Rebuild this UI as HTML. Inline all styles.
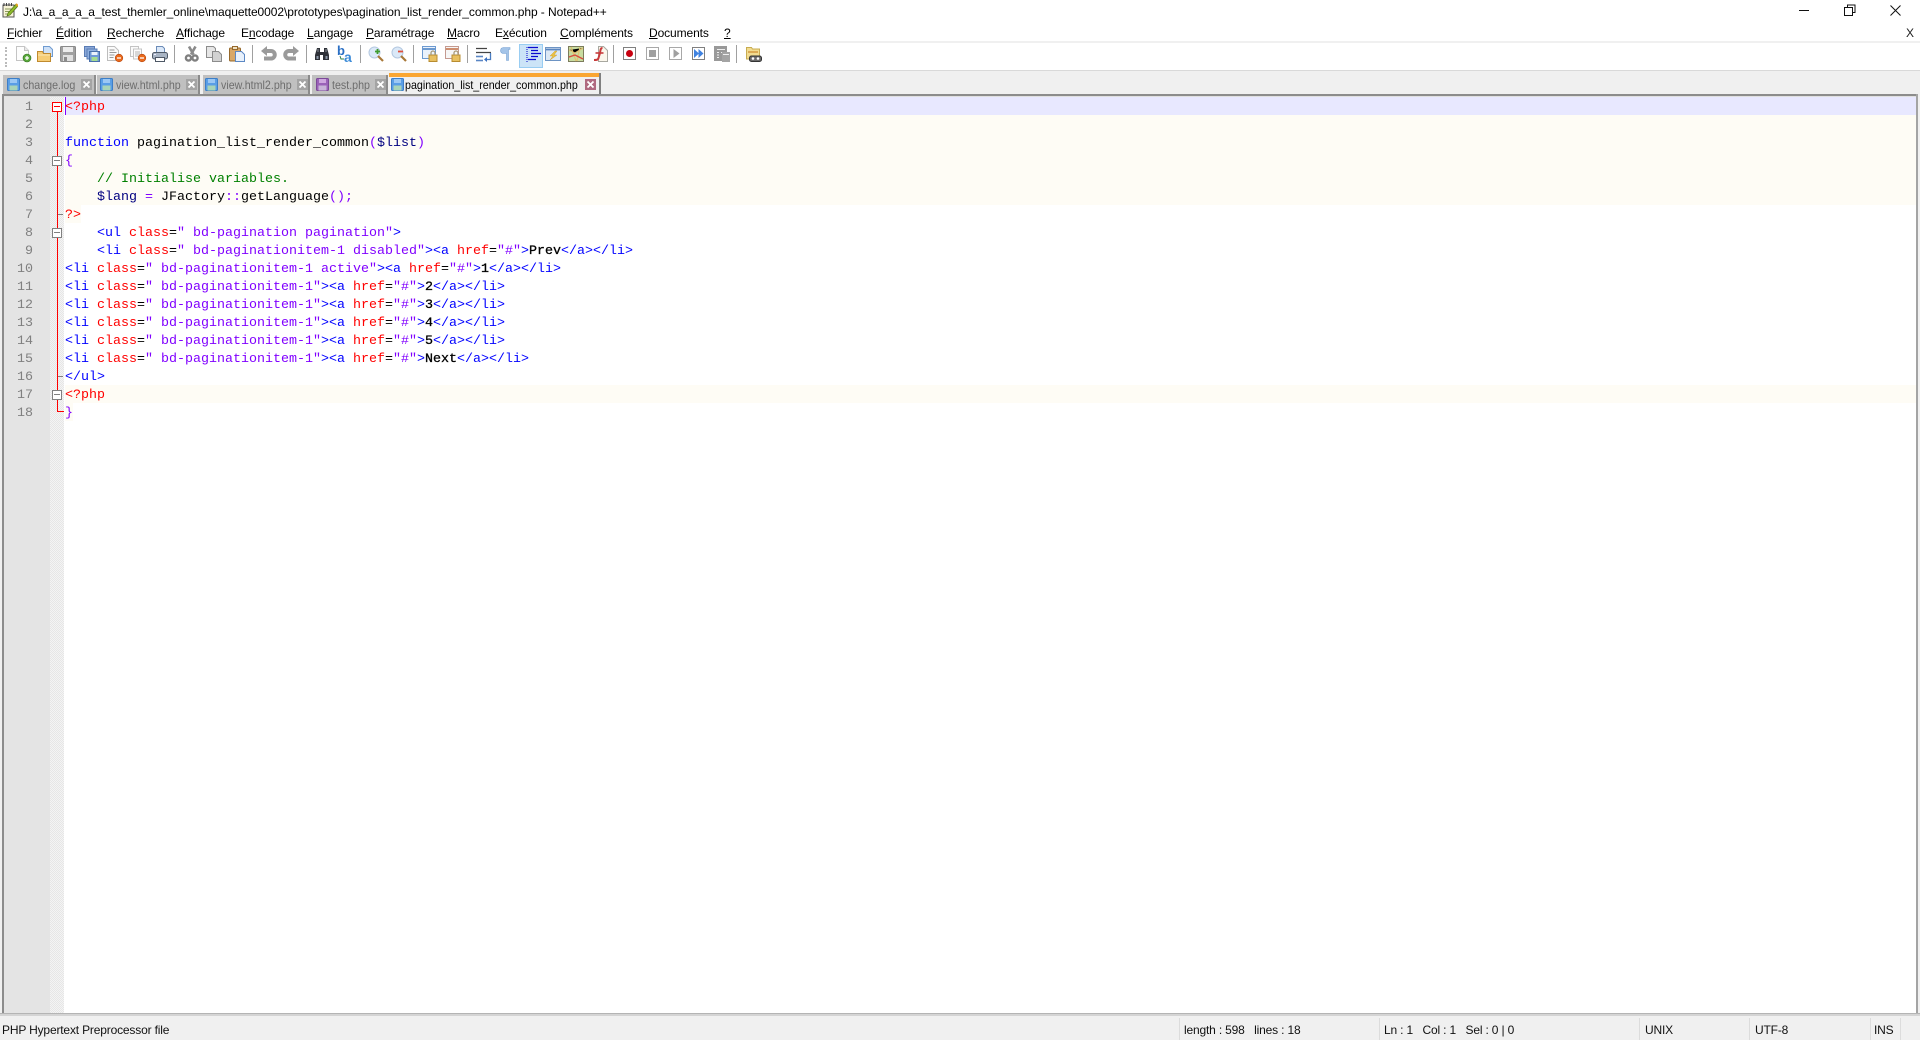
<!DOCTYPE html>
<html lang="fr"><head><meta charset="utf-8"><title>Notepad++</title>
<style>
html,body{margin:0;padding:0;width:1920px;height:1040px;overflow:hidden;background:#fff}
body{position:relative;font-family:"Liberation Sans",sans-serif;font-size:12px;color:#000}
.abs,.m,.tb,.sep,.tab,.l,.n,.st,.sv{position:absolute}
.m{top:26px;line-height:15px;white-space:nowrap;color:#000;letter-spacing:-.1px}
.m u{text-decoration:underline}
.sv{width:16px;height:16px;top:46px;overflow:visible}
.sep{top:45px;width:1px;height:18px;background:#a0a0a0}
.tab{top:75px;height:19px;background:#c0c0c0;border-right:2px solid #8c8c8c}
.tt{position:absolute;top:78px;line-height:15px;color:#6d6d6d;white-space:nowrap;transform:scaleX(.89);transform-origin:0 0}
.l{left:65px;height:18px;line-height:18px;margin-top:2px;font-family:"Liberation Mono",monospace;font-size:13.33px;white-space:pre;color:#000}
.n{left:4px;width:29px;text-align:right;height:18px;line-height:18px;margin-top:2px;font-family:"Liberation Mono",monospace;font-size:13.33px;color:#808080}
.t{color:#00f}.a{color:#f00}.s{color:#8000ff}.v{color:#000080}.c{color:#008000}.p{color:#f00}.b{-webkit-text-stroke:.3px #000}
.st{top:1022px;line-height:16px;white-space:nowrap;color:#111;letter-spacing:-.17px}
.ss{position:absolute;top:1018px;height:22px;width:1px;background:#dcdcdc}
.fb{position:absolute;left:52px;width:8px;height:8px;border:1px solid #808080;background:#fff}
.fb:after{content:"";position:absolute;left:1px;top:3px;width:6px;height:1px;background:#808080}
.fr{border-color:#f00}.fr:after{background:#f00}
</style></head><body>

<!-- title bar -->
<svg class="abs" style="left:2px;top:2px" width="16" height="16" viewBox="0 0 16 16"><rect x="1" y="3" width="11" height="12" fill="#f8f4d8" stroke="#555"/><path d="M2 1v3M4.500 1v3M7 1v3M9.500 1v3" stroke="#444"/><path d="M3 7h7M3 9.500h6M3 12h5" stroke="#8a9a5a"/><path d="M6 11L14 2l2 2-8 9-3 1z" fill="#8dbb2a" stroke="#4d6b10" stroke-width=".6"/><path d="M14 2l2 2" stroke="#e0a020" stroke-width="2"/></svg>
<div class="abs" style="left:23px;top:5px;line-height:15px;white-space:nowrap;letter-spacing:-.072px">J:\a_a_a_a_a_test_themler_online\maquette0002\prototypes\pagination_list_render_common.php - Notepad++</div>
<svg class="abs" style="left:1790px;top:0" width="130" height="20" viewBox="0 0 130 20" fill="none" stroke="#111"><path d="M9 10.500h10"/><rect x="54.500" y="7.500" width="8" height="8"/><path d="M57.500 7.500v-2.500h7.500v7.500h-2.500"/><path d="M100.500 5.500l10 10M110.500 5.500l-10 10"/></svg>

<!-- menu -->
<div class="m" style="left:7px"><u>F</u>ichier</div>
<div class="m" style="left:56px"><u>É</u>dition</div>
<div class="m" style="left:107px"><u>R</u>echerche</div>
<div class="m" style="left:176px"><u>A</u>ffichage</div>
<div class="m" style="left:241px">E<u>n</u>codage</div>
<div class="m" style="left:307px"><u>L</u>angage</div>
<div class="m" style="left:366px"><u>P</u>aramétrage</div>
<div class="m" style="left:447px"><u>M</u>acro</div>
<div class="m" style="left:495px">E<u>x</u>écution</div>
<div class="m" style="left:560px"><u>C</u>ompléments</div>
<div class="m" style="left:649px"><u>D</u>ocuments</div>
<div class="m" style="left:724px"><u>?</u></div>
<div class="m" style="left:1906px;color:#222">X</div>

<!-- toolbar -->
<div class="abs" style="left:0;top:41px;width:1920px;height:2px;background:#f0f0f0"></div>
<div class="abs" style="left:0;top:70px;width:1920px;height:25px;background:#f0f0f0"></div>
<div class="abs" style="left:0;top:70px;width:1920px;height:1px;background:#d9d9d9"></div>
<div class="abs" style="left:5px;top:47px;width:1px;height:20px;border-left:2px dotted #bbb"></div>

<svg class="sv" style="left:15px" viewBox="0 0 16 16"><path d="M1.500 .5h8l4 4v10h-12z" fill="#fdfdfd" stroke="#c4c4c4"/><path d="M9.500 .5v4h4" fill="#e8e8e8" stroke="#c4c4c4"/><circle cx="12" cy="12" r="4" fill="#5aa83c" stroke="#2e6e1c" stroke-width=".6"/><path d="M12 10v4M10 12h4" stroke="#fff" stroke-width="1.300"/></svg>
<svg class="sv" style="left:37px" viewBox="0 0 16 16"><path d="M6.500 .5h6l3 3v7h-9z" fill="#cfe1f7" stroke="#6f9bd0"/><path d="M.5 5.500h5l1 2h7v8h-13z" fill="#f6cd76" stroke="#c08a2e"/><path d="M1 9h12" stroke="#fbe6b4"/></svg>
<svg class="sv" style="left:60px" viewBox="0 0 16 16"><rect x=".5" y=".5" width="15" height="15" rx="1" fill="#a0a0a0" stroke="#8a8a8a"/><rect x="3" y="1" width="10" height="5" fill="#ececec"/><rect x="3" y="9" width="10" height="6" fill="#e0e0e0"/><rect x="4" y="11" width="3" height="4" fill="#8c8c8c"/></svg>
<svg class="sv" style="left:84px" viewBox="0 0 16 16"><rect x=".5" y=".5" width="10" height="10" fill="#8aa8d8" stroke="#5a7cb4"/><rect x="3" y="3" width="10" height="10" fill="#8fb0e0" stroke="#5a7cb4"/><rect x="5.500" y="5.500" width="10" height="10" fill="#6f9ad8" stroke="#4a70aa"/><rect x="7.500" y="6" width="6" height="3" fill="#eaf2fc"/><rect x="7.500" y="11" width="6" height="4" fill="#a4dc90"/></svg>
<svg class="sv" style="left:107px" viewBox="0 0 16 16"><path d="M.5 .5h7l4 4v10h-11z" fill="#fbfbfb" stroke="#bdbdbd"/><path d="M2.500 4h5M2.500 6.500h7M2.500 9h5M2.500 11.500h4" stroke="#9a9a9a"/><circle cx="12" cy="12" r="3.800" fill="#ea6a1c" stroke="#b54610" stroke-width=".6"/><path d="M10 12h4" stroke="#fff" stroke-width="1.300"/></svg>
<svg class="sv" style="left:130px" viewBox="0 0 16 16"><rect x=".5" y=".5" width="8" height="10" fill="#fbfbfb" stroke="#c4c4c4"/><rect x="3.500" y="3" width="8" height="10" fill="#fbfbfb" stroke="#c4c4c4"/><path d="M5 6h5M5 8h5M5 10h4" stroke="#b4b4b4"/><circle cx="12" cy="12" r="3.800" fill="#ea6a1c" stroke="#b54610" stroke-width=".6"/><path d="M10 12h4" stroke="#fff" stroke-width="1.300"/></svg>
<svg class="sv" style="left:152px" viewBox="0 0 16 16"><path d="M4.500 .5h6l2 2v5h-8z" fill="#dbe8f8" stroke="#6c8cb8"/><rect x=".5" y="6.500" width="15" height="6.500" rx="2" fill="#a8b4c4" stroke="#4e5866"/><rect x="3.500" y="11.500" width="9" height="4" fill="#fff" stroke="#4e5866"/><path d="M2 8.500h2" stroke="#eef"/></svg>
<div class="sep" style="left:174px"></div>
<svg class="sv" style="left:184px" viewBox="0 0 16 16"><path d="M11.500 .5L7 8.500M5 .5L9.500 8.500" stroke="#8a8a8a" stroke-width="2.600" fill="none"/><circle cx="4.500" cy="12" r="2.600" fill="none" stroke="#808080" stroke-width="2.400"/><circle cx="11" cy="12" r="2.600" fill="none" stroke="#808080" stroke-width="2.400"/></svg>
<svg class="sv" style="left:206px" viewBox="0 0 16 16"><path d="M.5 .5h7l2 2v9h-9z" fill="#e6e6e6" stroke="#8c8c8c"/><path d="M6.500 5.500h6l3 3v7h-9z" fill="#d2d2d2" stroke="#8c8c8c"/></svg>
<svg class="sv" style="left:229px" viewBox="0 0 16 16"><rect x=".5" y="2" width="11" height="13" rx="1" fill="#d9a868" stroke="#96682a"/><rect x="3.500" y=".5" width="5" height="3" fill="#efe1c2" stroke="#96682a"/><path d="M6.500 5.500h6l3 3v7h-9z" fill="#e8f1fc" stroke="#5c88c4"/></svg>
<div class="sep" style="left:252px"></div>
<svg class="sv" style="left:261px" viewBox="0 0 16 16"><path d="M5 5h5a3.500 3.500 0 0 1 0 7.500H3" fill="none" stroke="#9a9a9a" stroke-width="4"/><path d="M6 0v10L0 5z" fill="#9a9a9a"/></svg>
<svg class="sv" style="left:283px" viewBox="0 0 16 16"><path d="M11 5H6a3.500 3.500 0 0 0 0 7.500h7" fill="none" stroke="#9a9a9a" stroke-width="4"/><path d="M10 0v10l6-5z" fill="#9a9a9a"/></svg>
<div class="sep" style="left:306px"></div>
<svg class="sv" style="left:314px" viewBox="0 0 16 16"><path d="M3 2h3v4h4V2h3l2 7v5h-6V9H6v5H1V9z" fill="#2e3138"/><path d="M2.500 10h2v3h-2zM11.500 10h2v3h-2z" fill="#8c98a8"/><path d="M3.500 3h1v3h-1zM11.500 3h1v3h-1z" fill="#8a8f99"/></svg>
<svg class="sv" style="left:337px" viewBox="0 0 16 16"><text x="0" y="9" font-family="Liberation Sans,sans-serif" font-size="13" font-weight="700" fill="#2a6fc4">b</text><text x="7" y="16" font-family="Liberation Sans,sans-serif" font-size="14" font-weight="700" fill="#3a8ad8">a</text><path d="M3 10l1 3h3" stroke="#2e7d4a" fill="none"/></svg>
<div class="sep" style="left:360px"></div>
<svg class="sv" style="left:368px" viewBox="0 0 16 16"><circle cx="6.500" cy="6.500" r="5.500" fill="#dbe9f8" stroke="#b4c8e0"/><path d="M10 10l5 5" stroke="#a87838" stroke-width="2.200"/><path d="M9.500 3v5M7 5.500h5" stroke="#3e9c2e" stroke-width="1.800"/></svg>
<svg class="sv" style="left:391px" viewBox="0 0 16 16"><circle cx="6.500" cy="6.500" r="5.500" fill="#dbe9f8" stroke="#b4c8e0"/><path d="M10 10l5 5" stroke="#a87838" stroke-width="2.200"/><path d="M7 5.500h5" stroke="#e0503c" stroke-width="1.800"/></svg>
<div class="sep" style="left:413px"></div>
<svg class="sv" style="left:422px" viewBox="0 0 16 16"><rect x=".5" y=".5" width="13" height="12" fill="#eaf2fc" stroke="#6d9ad0"/><path d="M1 3h12" stroke="#6d9ad0" stroke-width="2"/><rect x="7" y="9" width="8" height="6.500" fill="#e8c060" stroke="#b88c30"/><path d="M9 9V7a2 2 0 0 1 4 0v2" fill="none" stroke="#a89a78" stroke-width="1.300"/></svg>
<svg class="sv" style="left:445px" viewBox="0 0 16 16"><rect x=".5" y=".5" width="13" height="12" fill="#f6f6f6" stroke="#c49a90"/><path d="M1 3h12" stroke="#cf8f70" stroke-width="2"/><rect x="7" y="9" width="8" height="6.500" fill="#e8c060" stroke="#b88c30"/><path d="M9 9V7a2 2 0 0 1 4 0v2" fill="none" stroke="#a89a78" stroke-width="1.300"/></svg>
<div class="sep" style="left:467px"></div>
<svg class="sv" style="left:476px" viewBox="0 0 16 16"><path d="M0 2.500h11M0 6.500h15" stroke="#444" stroke-width="1.200"/><path d="M0 10.500h7" stroke="#5a86c4" stroke-width="1.600"/><path d="M14.500 7v6.500H10" stroke="#4a7cc0" stroke-width="1.300" fill="none"/><path d="M11 11v5l-3-2.500z" fill="#3a70c0"/><path d="M0 14.500h7" stroke="#5a86c4" stroke-width="1.600"/></svg>
<svg class="sv" style="left:497px" viewBox="0 0 16 16"><path d="M6 1.500h7v2h-1.500v11H9.500v-7H6.500a3 3 0 0 1 0-6zM10 3.500" fill="#a4c4e8" stroke="#7aa4d4" stroke-width=".6"/></svg>
<div class="abs" style="left:519px;top:44px;width:22px;height:22px;background:#cce4f7;border:1px solid #99cdf2"></div>
<svg class="sv" style="left:524px;width:18px" viewBox="0 0 18 16"><path d="M3 1v15" stroke="#0000c8" stroke-dasharray="1 1"/><path d="M4 1.500h10M7 4.500h7M7 7.500h10M7 10.500h7M4 13.500h8" stroke="#0a0ad0" stroke-width="1.300"/></svg>
<svg class="sv" style="left:545px" viewBox="0 0 16 16"><rect x=".5" y="1.500" width="15" height="13" fill="#fff" stroke="#6d94c4"/><path d="M1 3.500h14" stroke="#5a86c0" stroke-width="2"/><rect x="1" y="5" width="14" height="9" fill="#dce8f5"/><path d="M10 5L5 10h3l-3 4 7-5H9l3-4z" fill="#ecc040" stroke="#c49a28" stroke-width=".4"/></svg>
<svg class="sv" style="left:568px" viewBox="0 0 16 16"><rect x=".5" y=".5" width="15" height="15" fill="#c8dca0" stroke="#7c7c5c"/><path d="M1 4l6 3 8-5M3 1l5 14M12 1L9 15" stroke="#e0c070" stroke-width="1.200"/><path d="M1 11l6-2 8 4" stroke="#d84a3c" stroke-width="1.300" fill="none"/></svg>
<svg class="sv" style="left:592px" viewBox="0 0 16 16"><path d="M6.500 .5h5l4 4v11h-9z" fill="#fbf7ec" stroke="#a8a8a0"/><path d="M10.500 2c-2 0-2 2-2.500 5L6.500 12c-.5 2-2 2-4.500 2" fill="none" stroke="#c83a3a" stroke-width="2"/><path d="M3.500 7h8" stroke="#c83a3a" stroke-width="1.600"/></svg>
<div class="sep" style="left:613px"></div>
<svg class="sv" style="left:623px;width:14px" viewBox="0 0 14 16"><rect x=".5" y="1.500" width="12" height="12" fill="#fff" stroke="#808080"/><circle cx="6.500" cy="7.500" r="3.500" fill="#c80010"/></svg>
<svg class="sv" style="left:646px;width:14px" viewBox="0 0 14 16"><rect x=".5" y="1.500" width="12" height="12" fill="#fff" stroke="#a8a8a8"/><rect x="3" y="4" width="7" height="7" fill="#a0a0a0"/></svg>
<svg class="sv" style="left:669px;width:14px" viewBox="0 0 14 16"><rect x=".5" y="1.500" width="12" height="12" fill="#fff" stroke="#a8a8a8"/><path d="M4.500 3l6 4.500-6 4.500z" fill="#a0a0a0"/></svg>
<svg class="sv" style="left:692px;width:14px" viewBox="0 0 14 16"><rect x=".5" y="1.500" width="12" height="12" fill="#fff" stroke="#808080"/><path d="M2 3l5 4.500-5 4.500zM6.500 3l5 4.500-5 4.500z" fill="#3f82e0"/></svg>
<svg class="sv" style="left:714px" viewBox="0 0 16 16"><rect x="0" y="0" width="13" height="15" fill="#999"/><path d="M3 3.500h8M3 6.500h2M7 6.500h4M3 9h2M3 11.500h2" stroke="#eee"/><rect x="8" y="6" width="8" height="10" fill="#a4a4a4"/><path d="M9 8.500h6" stroke="#eee"/></svg>
<div class="sep" style="left:736px"></div>
<svg class="sv" style="left:746px" viewBox="0 0 16 16"><path d="M.5 1.500h5l1 1.500h7v10h-13z" fill="#f2dc90" stroke="#c8ac50"/><path d="M2 6h10" stroke="#d49a40" stroke-width="1.500"/><rect x="3.500" y="10" width="12" height="5.500" rx="2" fill="#6a6a6a" stroke="#333"/><circle cx="7" cy="12.500" r="1.300" fill="#fff"/><circle cx="12" cy="12.500" r="1.300" fill="#fff"/></svg>

<!-- tabs -->
<svg width="0" height="0" class="abs"><defs><g id="fl"><rect x=".5" y=".5" width="12" height="12" rx="1" fill="#5a9ee6" stroke="#3d7fc8"/><rect x="3" y="1" width="7" height="4" fill="#9cc8f4"/><rect x="2.500" y="7.500" width="8" height="5" fill="#a8d4b8"/></g><g id="flp"><rect x=".5" y=".5" width="12" height="12" rx="1" fill="#9a62b8" stroke="#7c4a98"/><rect x="3" y="1" width="7" height="4" fill="#cfa8e0"/><rect x="2.500" y="7.500" width="8" height="5" fill="#c8b4d8"/></g><g id="cx"><rect width="11" height="11" fill="#a4a4a4"/><path d="M2.500 2.500l6 6M8.500 2.500l-6 6" stroke="#fff" stroke-width="1.800"/></g></defs></svg>
<div class="tab" style="left:3px;width:91px"></div>
<div class="tab" style="left:97px;width:101px"></div>
<div class="tab" style="left:203px;width:105px"></div>
<div class="tab" style="left:312px;width:74px"></div>
<div class="abs" style="left:389px;top:73px;width:210px;height:22px;background:#f0f0f0;border-right:2px solid #808080"></div>
<div class="abs" style="left:389px;top:73px;width:210px;height:4px;background:#faa632"></div>
<svg class="abs" style="left:7px;top:78px" width="13" height="13"><use href="#fl"/></svg>
<svg class="abs" style="left:100px;top:78px" width="13" height="13"><use href="#fl"/></svg>
<svg class="abs" style="left:205px;top:78px" width="13" height="13"><use href="#fl"/></svg>
<svg class="abs" style="left:316px;top:78px" width="13" height="13"><use href="#flp"/></svg>
<svg class="abs" style="left:391px;top:78px" width="13" height="13"><use href="#fl"/></svg>
<div class="tt" style="left:23px">change.log</div>
<div class="tt" style="left:116px">view.html.php</div>
<div class="tt" style="left:221px">view.html2.php</div>
<div class="tt" style="left:332px">test.php</div>
<div class="tt" style="left:405px;color:#000">pagination_list_render_common.php</div>
<svg class="abs" style="left:81px;top:79px" width="11" height="11"><use href="#cx"/></svg>
<svg class="abs" style="left:186px;top:79px" width="11" height="11"><use href="#cx"/></svg>
<svg class="abs" style="left:297px;top:79px" width="11" height="11"><use href="#cx"/></svg>
<svg class="abs" style="left:375px;top:79px" width="11" height="11"><use href="#cx"/></svg>
<svg class="abs" style="left:585px;top:79px" width="11" height="11"><rect width="11" height="11" fill="#b06a80"/><path d="M2.500 2.500l6 6M8.500 2.500l-6 6" stroke="#fff" stroke-width="1.800"/></svg>

<!-- editor frame -->
<div class="abs" style="left:0;top:94px;width:1920px;height:2px;background:#8c8c8c"></div>
<div class="abs" style="left:0;top:96px;width:1920px;height:1px;background:#e0e0e0"></div>
<div class="abs" style="left:0;top:94px;width:2px;height:922px;background:#f0f0f0"></div>
<div class="abs" style="left:2px;top:94px;width:2px;height:922px;background:#8c8c8c"></div>
<div class="abs" style="left:1916px;top:94px;width:2px;height:922px;background:#a4a4a4"></div>
<div class="abs" style="left:1918px;top:94px;width:2px;height:922px;background:#f0f0f0"></div>
<div class="abs" style="left:4px;top:97px;width:46px;height:916px;background:#e4e4e4"></div>
<div class="abs" style="left:50px;top:97px;width:14px;height:916px;background-color:#f4f4f4;background-image:linear-gradient(45deg,#e6e6e6 25%,transparent 25%,transparent 75%,#e6e6e6 75%),linear-gradient(45deg,#e6e6e6 25%,transparent 25%,transparent 75%,#e6e6e6 75%);background-size:2px 2px;background-position:0 0,1px 1px"></div>
<div class="abs" style="left:0;top:1013px;width:1920px;height:1px;background:#b4b4b4"></div>
<div class="abs" style="left:0;top:1014px;width:1920px;height:2px;background:#d4d4d4"></div>
<div class="abs" style="left:0;top:1016px;width:1920px;height:24px;background:#f0f0f0"></div>

<!-- line backgrounds -->
<div class="abs" style="left:65px;top:97px;width:1851px;height:18px;background:#e8e8ff"></div>
<div class="abs" style="left:65px;top:115px;width:1851px;height:90px;background:#fefcf5"></div>
<div class="abs" style="left:65px;top:205px;width:16px;height:18px;background:#fefcf5"></div>
<div class="abs" style="left:65px;top:385px;width:1851px;height:18px;background:#fefcf5"></div>
<div class="abs" style="left:65px;top:403px;width:8px;height:18px;background:#fefcf5"></div>
<div class="abs" style="left:65px;top:97px;width:1px;height:18px;background:#8000ff"></div>

<!-- fold margin -->
<div class="abs" style="left:57px;top:107px;width:1px;height:305px;background:#f00"></div>
<div class="abs" style="left:57px;top:411px;width:7px;height:1px;background:#f00"></div>
<div class="abs" style="left:58px;top:214px;width:5px;height:1px;background:#808080"></div>
<div class="abs" style="left:58px;top:376px;width:5px;height:1px;background:#808080"></div>
<div class="fb fr" style="top:102px"></div>
<div class="fb" style="top:156px"></div>
<div class="fb" style="top:228px"></div>
<div class="fb" style="top:390px"></div>

<!-- line numbers -->
<div class="n" style="top:97px">1</div><div class="n" style="top:115px">2</div><div class="n" style="top:133px">3</div><div class="n" style="top:151px">4</div><div class="n" style="top:169px">5</div><div class="n" style="top:187px">6</div><div class="n" style="top:205px">7</div><div class="n" style="top:223px">8</div><div class="n" style="top:241px">9</div><div class="n" style="top:259px">10</div><div class="n" style="top:277px">11</div><div class="n" style="top:295px">12</div><div class="n" style="top:313px">13</div><div class="n" style="top:331px">14</div><div class="n" style="top:349px">15</div><div class="n" style="top:367px">16</div><div class="n" style="top:385px">17</div><div class="n" style="top:403px">18</div>

<!-- code -->
<div class="l" style="top:97px"><span class="p">&lt;?php</span></div>
<div class="l" style="top:133px"><span class="t">function</span> pagination_list_render_common<span class="s">(</span><span class="v">$list</span><span class="s">)</span></div>
<div class="l" style="top:151px"><span class="s">{</span></div>
<div class="l" style="top:169px">    <span class="c">// Initialise variables.</span></div>
<div class="l" style="top:187px">    <span class="v">$lang</span> <span class="s">=</span> JFactory<span class="s">::</span>getLanguage<span class="s">();</span></div>
<div class="l" style="top:205px"><span class="p">?&gt;</span></div>
<div class="l" style="top:223px">    <span class="t">&lt;ul</span> <span class="a">class</span>=<span class="s">" bd-pagination pagination"</span><span class="t">&gt;</span></div>
<div class="l" style="top:241px">    <span class="t">&lt;li</span> <span class="a">class</span>=<span class="s">" bd-paginationitem-1 disabled"</span><span class="t">&gt;&lt;a</span> <span class="a">href</span>=<span class="s">"#"</span><span class="t">&gt;</span><span class="b">Prev</span><span class="t">&lt;/a&gt;&lt;/li&gt;</span></div>
<div class="l" style="top:259px"><span class="t">&lt;li</span> <span class="a">class</span>=<span class="s">" bd-paginationitem-1 active"</span><span class="t">&gt;&lt;a</span> <span class="a">href</span>=<span class="s">"#"</span><span class="t">&gt;</span><span class="b">1</span><span class="t">&lt;/a&gt;&lt;/li&gt;</span></div>
<div class="l" style="top:277px"><span class="t">&lt;li</span> <span class="a">class</span>=<span class="s">" bd-paginationitem-1"</span><span class="t">&gt;&lt;a</span> <span class="a">href</span>=<span class="s">"#"</span><span class="t">&gt;</span><span class="b">2</span><span class="t">&lt;/a&gt;&lt;/li&gt;</span></div>
<div class="l" style="top:295px"><span class="t">&lt;li</span> <span class="a">class</span>=<span class="s">" bd-paginationitem-1"</span><span class="t">&gt;&lt;a</span> <span class="a">href</span>=<span class="s">"#"</span><span class="t">&gt;</span><span class="b">3</span><span class="t">&lt;/a&gt;&lt;/li&gt;</span></div>
<div class="l" style="top:313px"><span class="t">&lt;li</span> <span class="a">class</span>=<span class="s">" bd-paginationitem-1"</span><span class="t">&gt;&lt;a</span> <span class="a">href</span>=<span class="s">"#"</span><span class="t">&gt;</span><span class="b">4</span><span class="t">&lt;/a&gt;&lt;/li&gt;</span></div>
<div class="l" style="top:331px"><span class="t">&lt;li</span> <span class="a">class</span>=<span class="s">" bd-paginationitem-1"</span><span class="t">&gt;&lt;a</span> <span class="a">href</span>=<span class="s">"#"</span><span class="t">&gt;</span><span class="b">5</span><span class="t">&lt;/a&gt;&lt;/li&gt;</span></div>
<div class="l" style="top:349px"><span class="t">&lt;li</span> <span class="a">class</span>=<span class="s">" bd-paginationitem-1"</span><span class="t">&gt;&lt;a</span> <span class="a">href</span>=<span class="s">"#"</span><span class="t">&gt;</span><span class="b">Next</span><span class="t">&lt;/a&gt;&lt;/li&gt;</span></div>
<div class="l" style="top:367px"><span class="t">&lt;/ul&gt;</span></div>
<div class="l" style="top:385px"><span class="p">&lt;?php</span></div>
<div class="l" style="top:403px"><span class="s">}</span></div>

<!-- status bar -->
<div class="st" style="left:2px">PHP Hypertext Preprocessor file</div>
<div class="ss" style="left:1179px"></div><div class="ss" style="left:1379px"></div><div class="ss" style="left:1639px"></div><div class="ss" style="left:1749px"></div><div class="ss" style="left:1870px"></div><div class="ss" style="left:1900px"></div>
<div class="st" style="left:1184px">length : 598&nbsp;&nbsp;&nbsp;lines : 18</div>
<div class="st" style="left:1384px">Ln : 1&nbsp;&nbsp;&nbsp;Col : 1&nbsp;&nbsp;&nbsp;Sel : 0 | 0</div>
<div class="st" style="left:1645px">UNIX</div>
<div class="st" style="left:1755px">UTF-8</div>
<div class="st" style="left:1874px">INS</div>
</body></html>
